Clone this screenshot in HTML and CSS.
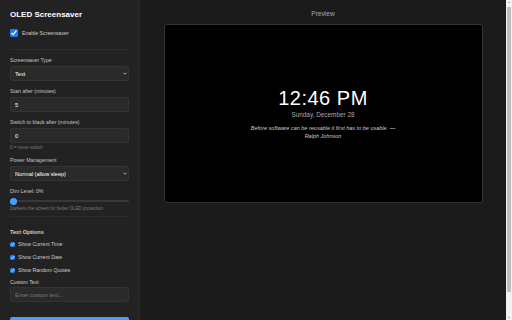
FILE: index.html
```html
<!DOCTYPE html>
<html lang="en">
<head>
<meta charset="utf-8">
<title>OLED Screensaver</title>
<link rel="stylesheet" href="styles.css">
</head>
<body>
<div class="app">
  <aside class="sidebar">
    <h1 class="title">OLED Screensaver</h1>
    <div class="section section-top">
      <label class="check-row check-big"><input type="checkbox" checked><span>Enable Screensaver</span></label>
    </div>
    <div class="section section-settings">
      <div class="field">
        <label class="label">Screensaver Type</label>
        <div class="select-wrap">
          <select class="control"><option>Text</option></select>
          <svg class="chev" viewBox="0 0 8 5" width="4" height="3"><path d="M1 1 L4 4 L7 1" fill="none" stroke="#cfcfcf" stroke-width="1.6"/></svg>
        </div>
      </div>
      <div class="field">
        <label class="label">Start after (minutes)</label>
        <input class="control" type="text" value="5">
      </div>
      <div class="field">
        <label class="label">Switch to black after (minutes)</label>
        <input class="control" type="text" value="0">
        <div class="hint hint-after-input">0 = never switch</div>
      </div>
      <div class="field">
        <label class="label">Power Management</label>
        <div class="select-wrap">
          <select class="control"><option>Normal (allow sleep)</option></select>
          <svg class="chev" viewBox="0 0 8 5" width="4" height="3"><path d="M1 1 L4 4 L7 1" fill="none" stroke="#cfcfcf" stroke-width="1.6"/></svg>
        </div>
      </div>
      <div class="field field-last">
        <label class="label label-dim">Dim Level: 0%</label>
        <input class="range" type="range" min="0" max="100" value="0">
        <div class="hint hint-dim">Darkens the screen for better OLED protection.</div>
      </div>
    </div>
    <div class="text-options">
      <h2 class="subhead">Text Options</h2>
      <div class="checks">
        <label class="check-row check-small"><input type="checkbox" checked><span>Show Current Time</span></label>
        <label class="check-row check-small"><input type="checkbox" checked><span>Show Current Date</span></label>
        <label class="check-row check-small"><input type="checkbox" checked><span>Show Random Quotes</span></label>
      </div>
      <label class="label label-custom">Custom Text</label>
      <input class="control" type="text" placeholder="Enter custom text...">
    </div>
    <button class="save">Save Settings</button>
  </aside>
  <main class="main">
    <div class="preview-title">Preview</div>
    <div class="preview">
      <div class="clock">12:46 PM</div>
      <div class="date">Sunday, December 28</div>
      <div class="quote">Before software can be reusable it first has to be usable. — Ralph Johnson</div>
    </div>
  </main>
</div>
<div class="scrollbar" aria-hidden="true">
  <span class="sb-arrow sb-up"></span>
  <div class="sb-thumb"></div>
  <span class="sb-arrow sb-down"></span>
</div>
</body>
</html>
```
FILE: styles.css
```css
html, body {
  margin: 0;
  padding: 0;
  background: #1b1b1b;
}
body {
  font-family: "Liberation Sans", Arial, sans-serif;
  color: #e0e0e0;
}
.app {
  display: flex;
  min-height: 100vh;
  padding-right: 6px;
}
.scrollbar {
  position: fixed;
  top: 0;
  right: 0;
  width: 6px;
  height: 100vh;
  background: #f1f1f1;
  display: flex;
  flex-direction: column;
  align-items: center;
}
.sb-arrow {
  width: 0;
  height: 0;
  border-left: 1.5px solid transparent;
  border-right: 1.5px solid transparent;
  flex: none;
}
.sb-up {
  border-bottom: 1.5px solid #7a7a7a;
  margin: 2px 0 3.5px;
}
.sb-down {
  border-top: 1.5px solid #7a7a7a;
  margin: auto 0 2px;
}
.sb-thumb {
  width: 4px;
  height: 285px;
  background: #bdbdbd;
  border-radius: 1px;
}
.sidebar {
  width: 140px;
  flex: none;
  box-sizing: border-box;
  background: #222222;
  border-right: 1px solid #2b2b2b;
  padding: 10px 10px 10px;
}
.title {
  margin: 0 0 10px;
  font-size: 8px;
  line-height: 9px;
  font-weight: bold;
  color: #ffffff;
}
.section {
  border-bottom: 1px solid #2d2d2d;
}
.section-top {
  padding-bottom: 11.5px;
  margin-bottom: 7.5px;
}
.section-settings {
  padding-bottom: 5.5px;
}
.check-row {
  display: flex;
  align-items: center;
  color: #cccccc;
  font-size: 5.2px;
  line-height: 6px;
}
.check-row input {
  margin: 0;
  accent-color: #1f78f0;
  flex: none;
}
.check-big {
  gap: 4px;
  height: 8px;
}
.check-big input {
  width: 8px;
  height: 8px;
}
.check-small {
  gap: 3px;
  height: 6px;
}
.check-small input {
  width: 5px;
  height: 5px;
}
.field {
  margin-bottom: 7px;
}
.field-last {
  margin-bottom: 0;
}
.label {
  display: block;
  font-size: 5.2px;
  line-height: 6px;
  color: #c4c4c4;
  margin-bottom: 3px;
}
.control {
  display: block;
  width: 100%;
  height: 15px;
  box-sizing: border-box;
  margin: 0;
  padding: 0 4px;
  background: #2a2a2a;
  border: 1px solid #333333;
  border-radius: 2px;
  color: #ffffff;
  font-family: "Liberation Sans", Arial, sans-serif;
  font-size: 5.6px;
  outline: none;
  -webkit-appearance: none;
  appearance: none;
}
.control::placeholder {
  color: #7a7a7a;
}
.select-wrap {
  position: relative;
}
.chev {
  position: absolute;
  right: 2px;
  top: 6px;
}
.hint {
  font-size: 4.5px;
  line-height: 5px;
  color: #7a7a7a;
}
.hint-after-input {
  margin-top: 2px;
}
.label-dim {
  margin-bottom: 3.5px;
}
.range {
  -webkit-appearance: none;
  appearance: none;
  display: block;
  width: 100%;
  height: 7px;
  margin: 0;
  background: transparent;
}
.range::-webkit-slider-runnable-track {
  height: 1.5px;
  background: #383838;
  border-radius: 1px;
}
.range::-webkit-slider-thumb {
  -webkit-appearance: none;
  appearance: none;
  width: 7px;
  height: 7px;
  border-radius: 50%;
  background: #4a9eff;
  border: none;
  margin-top: -2.75px;
}
.hint-dim {
  margin-top: 1px;
}
.text-options {
  padding-top: 12px;
}
.subhead {
  margin: 0;
  font-size: 5.6px;
  line-height: 6.5px;
  font-weight: bold;
  color: #cfcfcf;
}
.checks {
  display: flex;
  flex-direction: column;
  gap: 7px;
  margin-top: 5.5px;
}
.label-custom {
  margin-top: 6px;
  margin-bottom: 2px;
  color: #cfcfcf;
}
.save {
  display: block;
  width: 100%;
  height: 20px;
  margin-top: 15px;
  padding: 0;
  border: none;
  border-radius: 2px;
  background: #4a9eff;
  color: #ffffff;
  font-family: "Liberation Sans", Arial, sans-serif;
  font-size: 5.6px;
  line-height: 6.5px;
  font-weight: bold;
}
.main {
  flex: 1;
  min-width: 0;
  padding: 9.5px 23.5px;
  display: flex;
  flex-direction: column;
  align-items: stretch;
}
.preview-title {
  text-align: center;
  font-size: 6.6px;
  line-height: 8px;
  color: #a8a8a8;
  margin-bottom: 6.5px;
}
.preview {
  height: 179px;
  box-sizing: border-box;
  background: #000000;
  border: 1px solid #333333;
  border-radius: 3px;
  display: flex;
  flex-direction: column;
  align-items: center;
  justify-content: center;
  text-align: center;
}
.clock {
  font-size: 20px;
  line-height: 23px;
  font-weight: 300;
  letter-spacing: 0.5px;
  color: #ffffff;
}
.date {
  font-size: 6.4px;
  line-height: 7.5px;
  color: #aaaaaa;
  margin-top: 1px;
}
.quote {
  font-size: 5.5px;
  line-height: 7.5px;
  font-style: italic;
  color: #cccccc;
  margin-top: 7px;
  max-width: 156px;
}
```
